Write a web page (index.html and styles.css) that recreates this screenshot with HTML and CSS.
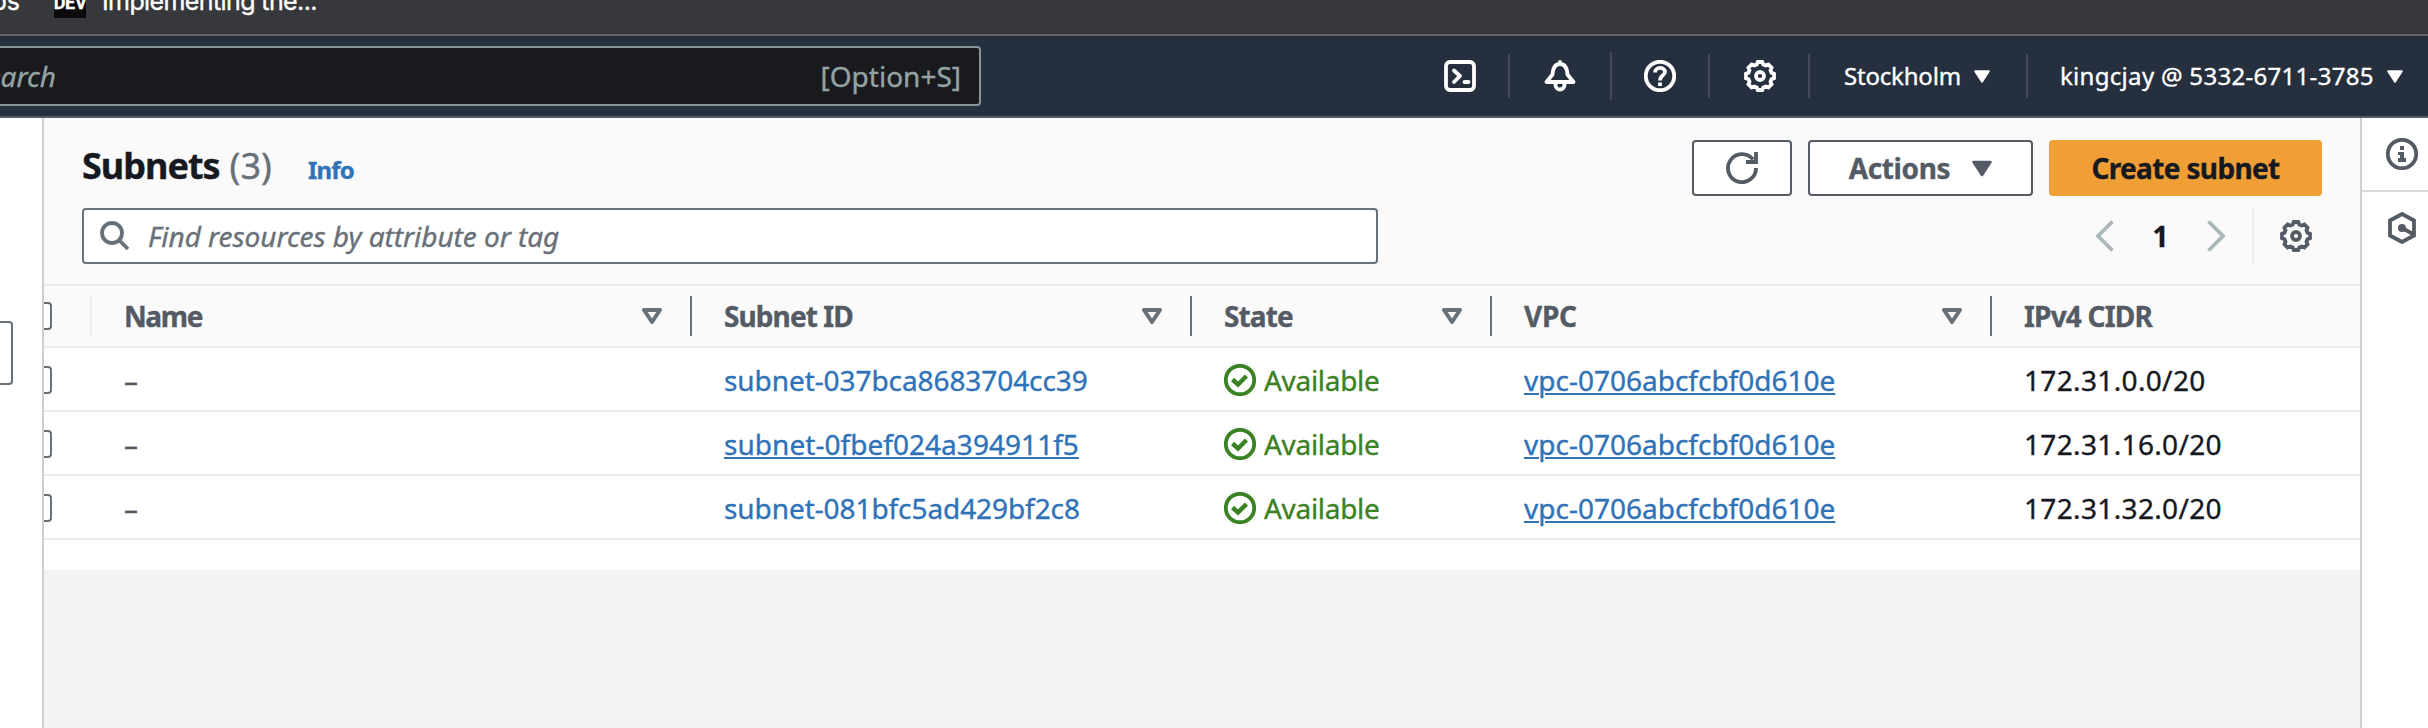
FILE: index.html
```html
<!DOCTYPE html>
<html lang="en">
<head>
<meta charset="utf-8">
<title>Subnets | VPC Console</title>
<link rel="stylesheet" href="styles.css">
</head>
<body>
<svg class="defs" width="0" height="0" aria-hidden="true">
  <symbol id="gear" viewBox="-16 -16 32 32"><path d="M14 -2.2V2.2L11.5 3.3L10.5 5.8L11.5 8.35L8.35 11.5L5.8 10.5L3.3 11.5L2.2 14H-2.2L-3.3 11.5L-5.8 10.5L-8.35 11.5L-11.5 8.35L-10.5 5.8L-11.5 3.3L-14 2.2V-2.2L-11.5 -3.3L-10.5 -5.8L-11.5 -8.35L-8.35 -11.5L-5.8 -10.5L-3.3 -11.5L-2.2 -14H2.2L3.3 -11.5L5.8 -10.5L8.35 -11.5L11.5 -8.35L10.5 -5.8L11.5 -3.3Z"/><circle r="4"/></symbol>
  <symbol id="check" viewBox="0 0 32 32"><circle cx="16" cy="16" r="14.2"/><path d="M8.5 15.5L14 20.5L22.5 12"/></symbol>
  <symbol id="filter" viewBox="0 0 20 16"><path d="M2 2H18L10 14Z"/></symbol>
  <symbol id="caret" viewBox="0 0 20 16"><path d="M1.5 1.5H18.5L10 14.5Z"/></symbol>
</svg>

<div class="bookmarks">
  <span class="bm-prev">ps</span>
  <span class="bm-dev">DEV</span>
  <span class="bm-title">Implementing the...</span>
</div>

<header class="nav">
  <div class="nav-search"><span class="nav-placeholder">Search</span><span class="nav-key">[Option+S]</span></div>
  <div class="nav-items">
    <div class="nav-icon"><svg class="icon round" viewBox="0 0 32 32"><rect x="2" y="2" width="28" height="28" rx="4"/><path d="M10 10.500L16 16L10 22M20.500 22H24.500"/></svg></div>
    <div class="nav-icon tall"><svg class="icon round" viewBox="0 0 32 32"><path d="M2.500 22H29.500L23.500 14.500C23 7.500 21 4 16 4S9 7.500 8.500 14.500Z"/><path d="M16 2V4M11.500 24V25A4.500 4.500 0 0 0 20.500 25V24"/></svg></div>
    <div class="nav-icon help"><svg class="icon" viewBox="0 0 32 32"><circle cx="16" cy="16" r="14.2"/><path d="M11 12.500C11 6.500 21 6.500 21 12C21 15.500 16 15 16 20.500M16 22.500V26"/></svg></div>
    <div class="nav-icon"><svg class="icon"><use href="#gear"/></svg></div>
    <div class="nav-menu region"><span class="nav-region">Stockholm</span><svg class="caret"><use href="#caret"/></svg></div>
    <div class="nav-menu account"><span class="nav-account">kingcjay @ 5332-6711-3785</span><svg class="caret"><use href="#caret"/></svg></div>
  </div>
</header>

<div class="layout">
  <aside class="side"><div class="side-box"></div></aside>
  <main class="main">
    <section class="panel">
      <div class="panel-head">
        <div class="title-row">
          <h1><span class="h-title">Subnets</span><span class="h-count">(3)</span></h1>
          <a class="info">Info</a>
          <div class="buttons">
            <button class="btn refresh" aria-label="Refresh"><svg class="icon" viewBox="0 0 32 32"><path d="M30 16A14 14 0 1 1 27 7.500"/><path d="M30 0V10H20"/></svg></button>
            <button class="btn actions"><span class="b-actions">Actions</span><svg class="caret"><use href="#caret"/></svg></button>
            <button class="btn primary"><span class="b-create">Create subnet</span></button>
          </div>
        </div>
        <div class="filter-row">
          <div class="find"><svg class="find-icon" viewBox="0 0 30 30"><circle cx="12" cy="12" r="10"/><path d="M19 19L28 28"/></svg><span class="find-text">Find resources by attribute or tag</span></div>
          <div class="pager">
            <svg class="chev" viewBox="0 0 18 32"><path d="M16.500 1.500L2 16L16.500 30.500"/></svg>
            <span class="page">1</span>
            <svg class="chev" viewBox="0 0 18 32"><path d="M1.500 1.500L16 16L1.500 30.500"/></svg>
            <div class="prefs"><svg class="icon"><use href="#gear"/></svg></div>
          </div>
        </div>
      </div>
      <div class="row head">
        <div class="cell pick"><i class="box"></i></div>
        <div class="cell"><span class="c-name">Name</span><svg class="filter"><use href="#filter"/></svg></div>
        <div class="cell"><span class="c-id">Subnet ID</span><svg class="filter"><use href="#filter"/></svg></div>
        <div class="cell"><span class="c-state">State</span><svg class="filter"><use href="#filter"/></svg></div>
        <div class="cell"><span class="c-vpc">VPC</span><svg class="filter"><use href="#filter"/></svg></div>
        <div class="cell"><span class="c-cidr">IPv4 CIDR</span></div>
      </div>
      <div class="row">
        <div class="cell pick"><i class="box"></i></div>
        <div class="cell dash">–</div>
        <div class="cell"><a class="sid">subnet-037bca8683704cc39</a></div>
        <div class="cell"><svg class="status"><use href="#check"/></svg><span class="avail">Available</span></div>
        <div class="cell"><a class="vpc">vpc-0706abcfcbf0d610e</a></div>
        <div class="cell"><span class="cidr">172.31.0.0/20</span></div>
      </div>
      <div class="row">
        <div class="cell pick"><i class="box"></i></div>
        <div class="cell dash">–</div>
        <div class="cell"><a class="sid hover">subnet-0fbef024a394911f5</a></div>
        <div class="cell"><svg class="status"><use href="#check"/></svg><span class="avail">Available</span></div>
        <div class="cell"><a class="vpc">vpc-0706abcfcbf0d610e</a></div>
        <div class="cell"><span class="cidr">172.31.16.0/20</span></div>
      </div>
      <div class="row">
        <div class="cell pick"><i class="box"></i></div>
        <div class="cell dash">–</div>
        <div class="cell"><a class="sid">subnet-081bfc5ad429bf2c8</a></div>
        <div class="cell"><svg class="status"><use href="#check"/></svg><span class="avail">Available</span></div>
        <div class="cell"><a class="vpc">vpc-0706abcfcbf0d610e</a></div>
        <div class="cell"><span class="cidr">172.31.32.0/20</span></div>
      </div>
    </section>
  </main>
  <aside class="tools">
    <div class="tool"><svg class="icon" viewBox="0 0 32 32"><circle cx="16" cy="16" r="14.2"/><path class="solid" d="M14 8H18V12H14ZM12 14H18V20H20V24H12V20H14V17H12Z"/></svg></div>
    <div class="tool"><svg class="icon" viewBox="0 0 32 32"><path d="M16 2L28 8.500V23.500L16 30L4 23.500V8.500Z"/><circle class="solid" cx="16" cy="16" r="4"/><path d="M16 16L27 22"/></svg></div>
  </aside>
</div>
</body>
</html>
```
FILE: styles.css
```css
* { box-sizing: border-box; }
body { margin: 0; width: 2428px; height: 728px; overflow: hidden; display: flex; flex-direction: column; background: #fff; color: #16191f; font-family: "Noto Sans", "Open Sans", sans-serif; font-size: 28px; line-height: 40px; -webkit-text-stroke: 0.35px currentColor; }
.defs { position: absolute; }
svg { display: block; flex: none; fill: none; stroke: currentColor; stroke-width: 3.8; }
span, a { white-space: nowrap; }
.icon { width: 32px; height: 32px; }
.round path { stroke-linecap: round; stroke-linejoin: round; }
#caret path { fill: currentColor; stroke-linejoin: round; stroke-width: 2.5; }
#filter path { stroke-linejoin: round; stroke-width: 4; }
#check path { stroke-width: 4.5; }
.solid { fill: currentColor; stroke: none; }

.bookmarks { flex: none; height: 36px; overflow: hidden; display: flex; align-items: flex-start; background: #37383b; border-bottom: 2px solid #626366; color: #fff; font-family: Inter, sans-serif; }
.bm-prev { width: 20px; margin-right: 34px; display: flex; justify-content: flex-end; font-size: 25px; line-height: 30px; margin-top: -14px; }
.bm-dev { width: 32px; height: 32px; margin-top: -14px; margin-right: 16px; background: #0b0b0c; display: flex; justify-content: center; font: bold 18px/33px Roboto, sans-serif; letter-spacing: -0.3px; }
.bm-title { font-size: 25px; line-height: 30px; margin-top: -14px; letter-spacing: -0.6px; }

.nav { flex: none; height: 82px; display: flex; align-items: center; justify-content: space-between; background: #252f3e; border-bottom: 2px solid #545b66; color: #fff; }
.nav-search { width: 981px; height: 60px; display: flex; align-items: center; justify-content: space-between; padding-right: 18px; background: #191a1e; border: 2px solid #879596; border-left: 0; border-radius: 0 4px 4px 0; color: #95a2a3; }
.nav-placeholder { width: 56px; display: flex; justify-content: flex-end; font-style: italic; }
.nav-items { height: 80px; display: flex; align-items: center; font-size: 24px; }
.nav-icon { width: 100px; height: 44px; padding-left: 2px; display: flex; align-items: center; justify-content: center; border-right: 2px solid #434b57; }
.nav-icon.tall { width: 102px; height: 48px; padding-left: 0; }
.nav-icon.help { width: 98px; padding-left: 0; }
.nav-menu { height: 44px; display: flex; align-items: center; }
.nav-menu .caret { width: 16px; height: 13px; }
.region { width: 218px; padding-left: 34px; gap: 13px; border-right: 2px solid #434b57; }
.nav-region { letter-spacing: -0.2px; }
.account { width: 400px; padding-left: 32px; gap: 13px; }
.nav-account { letter-spacing: 0.3px; }

.layout { flex: 1; min-height: 0; display: grid; grid-template-columns: 42px 2320px 66px; }
.side { padding-top: 203px; }
.side-box { width: 13px; height: 64px; border: 2px solid #687078; border-left: 0; border-radius: 0 4px 4px 0; }
.main { background: #f2f3f3; border-left: 2px solid #cdd1d3; border-right: 2px solid #cdd1d3; }
.panel { height: 452px; background: #fff; }
.panel-head { height: 168px; padding: 22px 38px 0; background: #fafafa; border-bottom: 2px solid #eaeded; }
.title-row { height: 56px; display: flex; }
h1 { margin: 0; font-size: 36px; line-height: 52px; display: flex; gap: 10px; width: 226px; }
.h-title { letter-spacing: -1px; }
.h-count { font-weight: 400; color: #687078; }
.info { color: #2f72b8; font-size: 24px; font-weight: 700; line-height: 60px; letter-spacing: -0.8px; }
.buttons { margin-left: auto; display: flex; gap: 16px; }
.btn { height: 56px; padding: 0; display: flex; align-items: center; justify-content: center; background: #fff; border: 2px solid #545b64; border-radius: 4px; color: #545b64; font: bold 28px/40px "Noto Sans", sans-serif; letter-spacing: -0.4px; }
.refresh { width: 100px; }
.actions { width: 225px; gap: 22px; }
.actions .caret { width: 20px; height: 17px; }
.primary { width: 273px; background: #f09f37; border-color: #f09f37; color: #16191f; letter-spacing: -0.65px; }
.filter-row { margin-top: 12px; height: 56px; display: flex; justify-content: space-between; }
.find { width: 1296px; display: flex; align-items: center; gap: 18px; padding-left: 16px; background: #fff; border: 2px solid #687078; border-radius: 4px; color: #687078; font-style: italic; }
.find-text { letter-spacing: -0.05px; }
.find-icon { width: 30px; height: 30px; }
.pager { display: flex; align-items: center; color: #16191f; font-weight: 700; }
.chev { width: 18px; height: 32px; color: #aab7b8; }
.page { width: 93px; text-align: center; }
.prefs { margin-left: 27px; width: 70px; height: 56px; padding-left: 26px; display: flex; align-items: center; border-left: 2px solid #eaeded; color: #545b64; }

.row { height: 64px; padding-top: 2px; display: grid; grid-template-columns: 48px 600px 500px 300px 500px 1fr; border-bottom: 2px solid #eaeded; }
.cell { display: flex; align-items: center; padding-left: 32px; }
.row.head { height: 62px; padding-top: 0; background: #fafafa; color: #545b64; font-weight: 700; align-items: center; }
.row.head .cell { height: 40px; justify-content: space-between; padding-right: 28px; border-right: 2px solid #687078; }
.row.head .cell:last-child { border: 0; }
.row .cell.pick, .row.head .cell.pick { justify-content: flex-start; padding: 0; border-color: #eaeded; }
.box { width: 8px; height: 28px; background: #fff; border: 2px solid #687078; border-left: 0; border-radius: 0 4px 4px 0; }
.filter { width: 20px; height: 16px; color: #687078; }
.c-name { letter-spacing: -1.4px; }
.c-id, .c-state { letter-spacing: -0.9px; }
.c-vpc { letter-spacing: -0.3px; }
.c-cidr { letter-spacing: -0.8px; }
.dash { color: #545b64; }
.sid, .vpc { color: #2f72b8; }
.sid { letter-spacing: -0.08px; }
.sid.hover { letter-spacing: 0.04px; }
.vpc, .hover { text-decoration: underline; text-decoration-thickness: 2px; text-underline-offset: 2px; }
.status { width: 32px; height: 32px; margin-right: 8px; color: #3b8224; }
.avail { color: #3b8224; letter-spacing: -0.3px; }
.cidr { letter-spacing: 0.35px; }

.tools { background: #fff; color: #545b64; }
.tool { height: 74px; padding: 20px 0 0 24px; border-bottom: 2px solid #d5dbdb; }
.tool + .tool { border: 0; }
```
